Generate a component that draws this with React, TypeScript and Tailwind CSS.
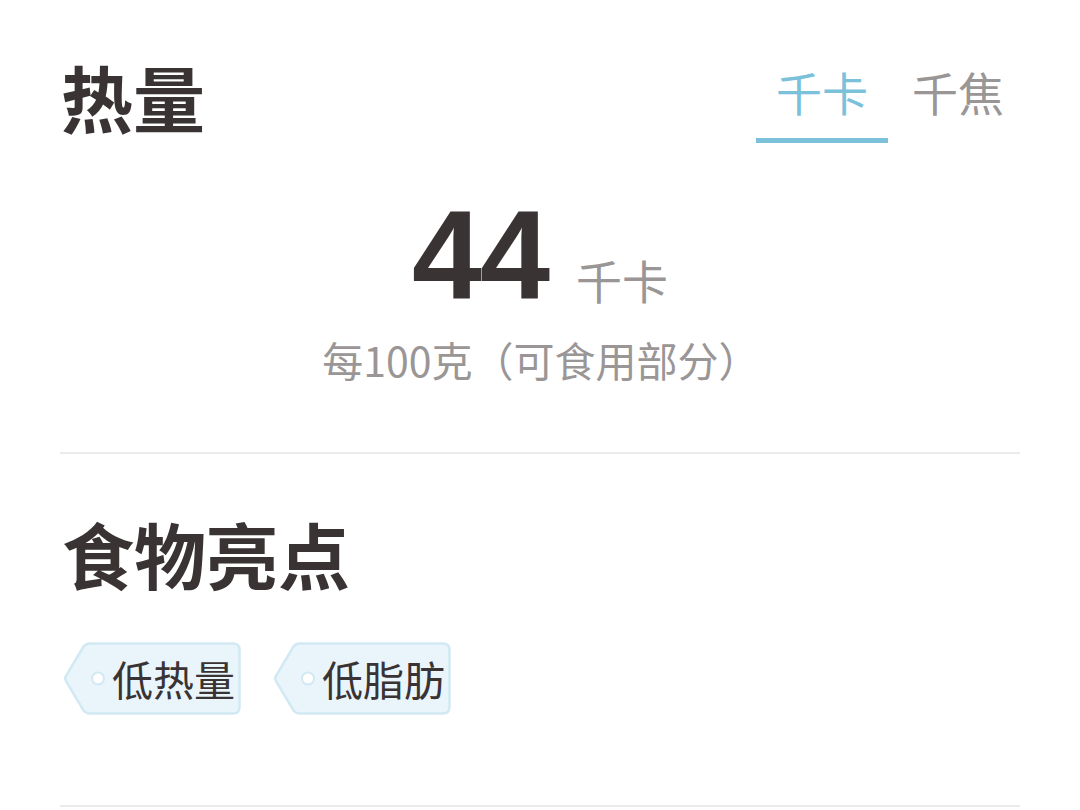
import React from "react";

const CJK = "font-['Noto_Sans_CJK_SC',_'Noto_Sans',_sans-serif]";

function Tag({ label }: { label: string }) {
  return (
    <div className="relative w-[178px] h-[73px] flex items-center">
      <svg className="absolute inset-0" width="178" height="73" viewBox="0 0 178 73">
        <path
          d="M27 1.5 H170 Q176.5 1.5 176.5 8 V65 Q176.5 71.5 170 71.5 H27 Q23 71.5 20.5 68.5 L3 39 Q1.2 36.5 3 34 L20.5 4.5 Q23 1.5 27 1.5 Z"
          fill="#e9f5fb"
          stroke="#d2e9f3"
          strokeWidth="2.5"
        />
        <circle cx="35" cy="36.5" r="6" fill="#ffffff" stroke="#d2e9f3" strokeWidth="2" />
      </svg>
      <span className={`relative pl-[49px] text-[41px] leading-none text-[#3a3334] ${CJK}`}>{label}</span>
    </div>
  );
}

export default function App() {
  return (
    <div className={`w-[1080px] h-[810px] bg-white overflow-hidden px-[60px] ${CJK}`}>
      <div className="flex items-start justify-between pt-[60px]">
        <h1 className="text-[72px] font-bold leading-none text-[#3a3334] pl-[1px]">热量</h1>
        <div className="flex items-start mr-[16px] -mt-[4px]">
          <div className="flex flex-col items-center w-[132px]">
            <span className="text-[46px] leading-none text-[#7cc1da] pt-[12px]">千卡</span>
            <div className="mt-[24px] h-[5px] w-[132px] bg-[#7cc1da]" />
          </div>
          <span className="ml-[24px] text-[46px] leading-none text-[#9a9696] pt-[12px]">千焦</span>
        </div>
      </div>

      <div className="flex flex-col items-center mt-[50px]">
        <div className="flex items-baseline">
          <span className="font-['Liberation_Sans',_Arial,_sans-serif] font-bold text-[126px] leading-none text-[#3a3334] tracking-[-2px]">
            44
          </span>
          <span className="ml-[28px] text-[46px] leading-none text-[#9a9696]">千卡</span>
        </div>
        <div className="mt-[20px] text-[41px] leading-none text-[#9a9696] pl-[2px]">
          每100克（可食用部分）
        </div>
      </div>

      <div className="mt-[72px] h-[2px] bg-[#ebebeb]" />

      <h2 className="mt-[63px] text-[72px] font-bold leading-none text-[#3a3334] pl-[2px]">食物亮点</h2>

      <div className="flex gap-[32px] mt-[53px] pl-[3px]">
        <Tag label="低热量" />
        <Tag label="低脂肪" />
      </div>

      <div className="mt-[90px] h-[2px] bg-[#ebebeb]" />
    </div>
  );
}
